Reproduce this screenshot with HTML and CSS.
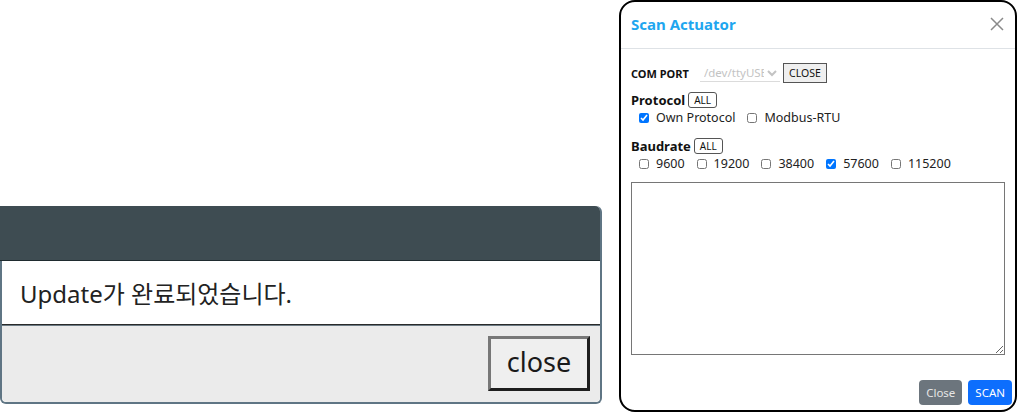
FILE: index.html
```html
<!DOCTYPE html>
<html lang="ko">
<head>
<meta charset="utf-8">
<title>Dialogs</title>
<link rel="stylesheet" href="styles.css">
</head>
<body>
<div class="page">
  <div class="alert">
    <div class="alert-head"></div>
    <div class="alert-body">Update가 완료되었습니다.</div>
    <div class="alert-foot">
      <button class="alert-close">close</button>
    </div>
  </div>

  <div class="modal">
    <div class="modal-head">
      <span class="modal-title">Scan Actuator</span>
      <svg class="x-icon" width="14" height="14" viewBox="0 0 14 14"><path d="M1 1L13 13M13 1L1 13" stroke="#8a8a8a" stroke-width="1.5" fill="none"/></svg>
    </div>
    <div class="modal-body">
      <div class="row port-row">
        <span class="lbl-sm">COM PORT</span>
        <select class="port-select" disabled><option>/dev/ttyUSB0</option></select>
        <button class="btn-close-port">CLOSE</button>
      </div>
      <div class="group">
        <div class="group-title"><span class="lbl">Protocol</span><button class="btn-all">ALL</button></div>
        <div class="checks">
          <label class="chk"><input type="checkbox" checked><span>Own Protocol</span></label>
          <label class="chk"><input type="checkbox"><span>Modbus-RTU</span></label>
        </div>
      </div>
      <div class="group">
        <div class="group-title"><span class="lbl">Baudrate</span><button class="btn-all">ALL</button></div>
        <div class="checks">
          <label class="chk"><input type="checkbox"><span>9600</span></label>
          <label class="chk"><input type="checkbox"><span>19200</span></label>
          <label class="chk"><input type="checkbox"><span>38400</span></label>
          <label class="chk"><input type="checkbox" checked><span>57600</span></label>
          <label class="chk"><input type="checkbox"><span>115200</span></label>
        </div>
      </div>
      <textarea class="log"></textarea>
    </div>
    <div class="modal-foot">
      <button class="btn btn-grey">Close</button>
      <button class="btn btn-blue">SCAN</button>
    </div>
  </div>
</div>
</body>
</html>
```

FILE: styles.css
```css
html, body {
  margin: 0;
  padding: 0;
  background: #fff;
}
.page {
  display: flex;
  align-items: flex-start;
  font-family: "Noto Sans", "Noto Sans CJK KR", sans-serif;
}

/* left alert dialog */
.alert {
  margin-top: 206px;
  width: 598px;
  border-right: 2px solid #5f7584;
  border-bottom: 2px solid #5f7584;
  border-left: 2px solid #5f7584;
  border-radius: 0 6px 6px 6px;
  display: flex;
  flex-direction: column;
}
.alert-head {
  height: 54px;
  background: #3e4c52;
  border-bottom: 1px solid #1f2b2f;
  border-radius: 0 5px 0 0;
  margin-left: -2px;
}
.alert-body {
  height: 63px;
  background: #fff;
  display: flex;
  align-items: center;
  padding-left: 18px;
  font-size: 24px;
  color: #222;
  border-bottom: 1px solid #2a2a2a;
}
.alert-foot {
  height: 77px;
  background: #ebebeb;
  border-top: 1px solid #6c7b84;
  display: flex;
  justify-content: flex-end;
  align-items: flex-start;
  padding: 10px 10px 0 0;
  box-sizing: border-box;
  border-radius: 0 0 5px 5px;
}
.alert-close {
  width: 102px;
  height: 55px;
  background: #efefef;
  border-style: solid;
  border-width: 3px;
  border-color: #777 #1e1e1e #1e1e1e #777;
  font-family: "Noto Sans", sans-serif;
  font-size: 27px;
  color: #1a1a1a;
  padding: 0 0 4px 0;
}

/* right modal */
.modal {
  margin-left: 17px;
  width: 394px;
  height: 408px;
  border: 2px solid #000;
  border-radius: 16px;
  display: flex;
  flex-direction: column;
  background: #fff;
  font-family: "Noto Sans", sans-serif;
}
.modal-head {
  height: 47px;
  border-bottom: 1px solid #dee2e6;
  display: flex;
  align-items: center;
  justify-content: space-between;
  padding: 0 11px 3px 10px;
  box-sizing: border-box;
}
.modal-title {
  color: #1ea6ef;
  font-weight: 700;
  font-size: 15px;
}
.modal-body {
  padding: 14px 10px 0 10px;
  display: flex;
  flex-direction: column;
  flex: 1;
}
.row {
  display: flex;
  align-items: center;
}
.port-row {
  height: 20px;
}
.lbl-sm {
  font-size: 11px;
  font-weight: 700;
  color: #111;
  width: 69px;
}
.port-select {
  width: 80px;
  height: 18px;
  border: none;
  border-bottom: 1px solid #ccc;
  background: #fff;
  color: #aaa;
  font-size: 11.5px;
  font-family: "Noto Sans", sans-serif;
  padding: 0;
  margin-right: 3px;
}
.btn-close-port {
  height: 20px;
  padding: 0 5px;
  font-size: 10.5px;
  font-family: "Noto Sans", sans-serif;
  background: #efefef;
  border: 1px solid #555;
  color: #111;
}
.group {
  margin-top: 8px;
}
.group + .group {
  margin-top: 10px;
}
.group-title {
  display: flex;
  align-items: center;
  gap: 3px;
  height: 17px;
}
.lbl {
  font-size: 13px;
  font-weight: 700;
  color: #111;
}
.btn-all {
  height: 16px;
  padding: 0 5px;
  font-size: 10px;
  font-family: "Noto Sans", sans-serif;
  background: #fff;
  border: 1px solid #555;
  border-radius: 3px;
  color: #111;
}
.checks {
  display: flex;
  gap: 12px;
  padding-left: 8px;
  height: 19px;
  align-items: center;
}
.chk {
  display: flex;
  align-items: center;
  font-size: 12.5px;
  color: #222;
}
.chk input {
  width: 10px;
  height: 10px;
  margin: 0 7px 0 0;
}
.log {
  margin-top: 9px;
  width: 374px;
  height: 173px;
  box-sizing: border-box;
  border: 1px solid #767676;
  resize: vertical;
}
.modal-foot {
  display: flex;
  justify-content: flex-end;
  gap: 6px;
  padding: 0 3px 5px 0;
}
.btn {
  height: 25px;
  padding: 0 7px;
  border: none;
  border-radius: 4px;
  font-size: 11.5px;
  font-family: "Noto Sans", sans-serif;
}
.btn-grey {
  background: #6c757d;
  color: #e6e6e6;
}
.btn-blue {
  background: #0d6efd;
  color: #fff;
}
```
